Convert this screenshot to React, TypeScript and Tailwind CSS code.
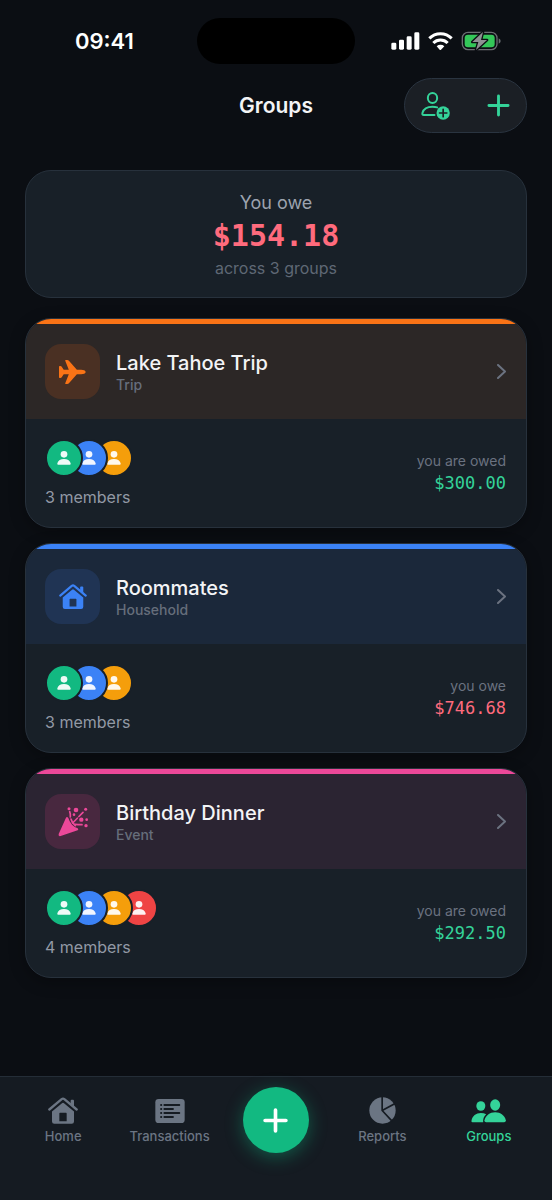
import React from "react";

type Group = {
  name: string;
  kind: string;
  members: number;
  label: string;
  amount: string;
  amountColor: string;
  bar: string;
  head: string;
  tile: string;
  icon: React.ReactNode;
};

const PlaneIcon = () => (
  <svg width="27" height="24" viewBox="0 0 80 71" fill="currentColor" aria-hidden="true">
    <path d="M79 35.5C79 40 72 42 66 42H53L30 68Q28 71 24 71H20Q17 71 19 67L29 42H14L8 51Q7 53 4 53H2Q0 53 0 51V20Q0 18 2 18H4Q7 18 8 20L14 29H29L19 4Q17 0 20 0H24Q28 0 30 3L53 29H66C72 29 79 31 79 35.5Z" />
  </svg>
);

const HomeIcon = ({ className }: { className: string }) => (
  <svg className={className} viewBox="0 0 90 80" fill="currentColor" aria-hidden="true">
    <path
      d="M4 37L41 6Q45 3 49 6L86 37"
      fill="none"
      stroke="currentColor"
      strokeWidth="7"
      strokeLinecap="round"
      strokeLinejoin="round"
    />
    <path d="M68 11Q68 8 71 8H75Q78 8 78 11V30L68 21Z" />
    <path
      fillRule="evenodd"
      d="M12 43L42 18Q45 16 48 18L78 43V73Q78 80 71 80H19Q12 80 12 73ZM36 47Q34 47 34 49V72H56V49Q56 47 54 47Z"
    />
  </svg>
);

const PartyIcon = () => (
  <svg width="30" height="30" viewBox="0 0 90 90" fill="currentColor" aria-hidden="true">
    <path d="M24 32Q27 27 31 33Q34 44 42 53Q50 61 59 64Q63 67 59 70L8 87Q0 89 2 81Z" />
    <g fill="none" stroke="currentColor" strokeWidth="5" strokeLinecap="round">
      <path d="M35 14Q38 21 37 30" />
      <path d="M44 48L75 16" strokeDasharray="20 7" />
      <path d="M51 52Q59 53 72 53" />
      <path d="M39 36Q41 46 52 56" />
    </g>
    <circle cx="33" cy="5" r="4.5" />
    <circle cx="54" cy="9" r="7" />
    <circle cx="83" cy="7" r="4.5" />
    <circle cx="48" cy="23" r="4" />
    <circle cx="70" cy="38" r="6.5" />
    <circle cx="86" cy="38" r="4" />
    <circle cx="84" cy="56" r="5" />
  </svg>
);

const TransactionsIcon = () => (
  <svg width="30" height="24" viewBox="0 0 90 72" aria-hidden="true">
    <rect x="1" width="88" height="72" rx="10" fill="currentColor" />
    <g stroke="#151b22" strokeWidth="5.5" strokeLinecap="round">
      <path d="M18 18h1M28 18h45M18 30h1M28 30h26M18 42h1M28 42h45M18 54h1M28 54h26" />
    </g>
  </svg>
);

const ReportsIcon = () => (
  <svg width="27" height="27" viewBox="0 0 80 80" aria-hidden="true">
    <circle cx="40" cy="40" r="39" fill="currentColor" />
    <path d="M39 -2V40L69 72M39 40L80 18" fill="none" stroke="#151b22" strokeWidth="5" />
  </svg>
);

const GroupsIcon = () => (
  <svg width="35" height="24" viewBox="0 0 104 72" fill="currentColor" aria-hidden="true">
    <ellipse cx="29" cy="21" rx="13.5" ry="14.5" />
    <ellipse cx="72" cy="18" rx="15" ry="17" />
    <path d="M4 70Q0 70 1 65C3 51 15 42 29 42Q38 42 45 46C38 52 35 60 36 70Z" />
    <path d="M45 70Q39 70 40 64C43 50 56 40 72 40C88 40 101 50 104 64Q104 70 99 70Z" />
  </svg>
);

const AddPersonIcon = () => (
  <svg width="29" height="28" viewBox="0 0 86 84" fill="none" aria-hidden="true">
    <g stroke="currentColor" strokeWidth="6" strokeLinecap="round">
      <ellipse cx="34" cy="18" rx="14" ry="15" />
      <path d="M40 69H8Q2 69 4 62C8 49 20 44 34 44Q42 44 48 46" />
    </g>
    <circle cx="66" cy="63" r="20" fill="currentColor" />
    <path d="M66 52V74M55 63H77" stroke="#1b1f25" strokeWidth="5" strokeLinecap="round" />
  </svg>
);

const PlusIcon = ({ className }: { className: string }) => (
  <svg className={className} viewBox="0 0 24 24" fill="none" stroke="currentColor" strokeLinecap="round" aria-hidden="true">
    <path d="M12 2V22M2 12H22" />
  </svg>
);

const StatusIcons = () => (
  <div className="flex items-center gap-2 text-white">
    <svg width="29" height="18" viewBox="0 0 87 54" fill="currentColor" aria-hidden="true">
      <rect x="1" y="32" width="15" height="21" rx="4" />
      <rect x="24" y="23" width="15" height="30" rx="4" />
      <rect x="47" y="13" width="15" height="40" rx="4" />
      <rect x="70" y="1" width="15" height="52" rx="4" />
    </svg>
    <svg width="25" height="18" viewBox="0 0 75 54" fill="none" stroke="currentColor" strokeWidth="9" aria-hidden="true">
      <path d="M4 19A47 47 0 0 1 71 19" />
      <path d="M16 33A30 30 0 0 1 59 33" />
      <path d="M26 43A17 17 0 0 1 49 43L39 53Q37 55 35 53Z" fill="currentColor" stroke="none" />
    </svg>
    <svg width="40" height="20" viewBox="0 0 120 60" aria-hidden="true">
      <rect x="4" y="4" width="104" height="52" rx="17" fill="none" stroke="#6b6e72" strokeWidth="4" />
      <rect x="11" y="11" width="90" height="38" rx="10" fill="#34c759" />
      <path d="M113 22Q119 25 119 30T113 38Z" fill="#6b6e72" />
      <path
        d="M66 3L34 33H52L45 57L78 27H60Z"
        fill="#8e9093"
        stroke="#0b0e13"
        strokeWidth="8"
        strokeLinejoin="round"
        paintOrder="stroke"
      />
    </svg>
  </div>
);

const avatars = [
  "z-40 bg-[#12b981]",
  "z-30 bg-[#3b82f6]",
  "z-20 bg-[#f59e0b]",
  "z-10 bg-[#ef4444]",
];

const groups: Group[] = [
  {
    name: "Lake Tahoe Trip",
    kind: "Trip",
    members: 3,
    label: "you are owed",
    amount: "$300.00",
    amountColor: "text-[#34d399]",
    bar: "bg-[#f97316]",
    head: "bg-[#2c2726]",
    tile: "bg-[#4a3023] text-[#f97316]",
    icon: <PlaneIcon />,
  },
  {
    name: "Roommates",
    kind: "Household",
    members: 3,
    label: "you owe",
    amount: "$746.68",
    amountColor: "text-[#ff6b7d]",
    bar: "bg-[#3b82f6]",
    head: "bg-[#1b283a]",
    tile: "bg-[#203454] text-[#3b82f6]",
    icon: <HomeIcon className="h-[25px] w-7" />,
  },
  {
    name: "Birthday Dinner",
    kind: "Event",
    members: 4,
    label: "you are owed",
    amount: "$292.50",
    amountColor: "text-[#34d399]",
    bar: "bg-[#ec4899]",
    head: "bg-[#2b2432]",
    tile: "bg-[#48283f] text-[#ec4899]",
    icon: <PartyIcon />,
  },
];

const Members = ({ count }: { count: number }) => (
  <div>
    <div className="flex -space-x-[13px]">
      {avatars.slice(0, count).map((color) => (
        <span
          key={color}
          className={`relative flex size-[38px] items-center justify-center rounded-full border-2 border-[#182028] ${color}`}
        >
          <svg width="14" height="14" viewBox="0 0 42 42" fill="#ffffff" fillOpacity="0.93" aria-hidden="true">
            <circle cx="21" cy="10" r="10" />
            <path d="M3 41Q0 41 1 37C3 28 11 24 21 24S39 28 41 37Q42 41 39 41Z" />
          </svg>
        </span>
      ))}
    </div>
    <p className="mt-2 text-base leading-6 text-[#9299a5]">{count} members</p>
  </div>
);

const GroupCard = ({ group }: { group: Group }) => (
  <a
    href="#"
    className="block overflow-hidden rounded-[26px] border border-[#27313c] bg-[#182028] shadow-[0_4px_16px_rgba(0,0,0,0.3)]"
  >
    <div className={`h-[5px] ${group.bar}`} />
    <div className={`flex items-center gap-4 py-5 pr-5 pl-[19px] ${group.head}`}>
      <div className={`flex size-[55px] items-center justify-center rounded-2xl ${group.tile}`}>
        {group.icon}
      </div>
      <div className="flex-1 pt-[3px]">
        <h2 className="text-xl leading-6 font-medium text-[#f3f4f6]">{group.name}</h2>
        <p className="text-sm leading-5 font-medium text-[#666e7b]">{group.kind}</p>
      </div>
      <svg width="9" height="15" viewBox="0 0 9 15" fill="none" stroke="#6b7280" strokeWidth="2" strokeLinecap="round" strokeLinejoin="round" aria-hidden="true">
        <path d="M1 1L8 7.500L1 14" />
      </svg>
    </div>
    <div className="flex items-center justify-between pt-5 pr-5 pb-[18px] pl-[19px]">
      <Members count={group.members} />
      <div className="pb-[3px] text-right">
        <p className="text-sm leading-5 text-[#6b7280]">{group.label}</p>
        <p className={`font-['DejaVu_Sans_Mono',monospace] text-[17px] leading-6 ${group.amountColor}`}>
          {group.amount}
        </p>
      </div>
    </div>
  </a>
);

const NavItem = ({
  label,
  icon,
  active = false,
}: {
  label: string;
  icon: React.ReactNode;
  active?: boolean;
}) => (
  <a
    href="#"
    aria-current={active ? "page" : undefined}
    className={`flex flex-col items-center gap-1 pt-5 ${active ? "text-[#34d399]" : "text-[#6b7583]"}`}
  >
    <span className="flex h-[27px] items-center">{icon}</span>
    <span className="text-[13px] leading-4 font-medium">{label}</span>
  </a>
);

const App = () => {
  return (
    <div className="flex min-h-screen flex-col bg-[#0b0e13] font-['Inter',sans-serif]">
      <div className="grid grid-cols-[1fr_158px_1fr] items-center px-[51px] pt-[18px]">
        <span className="pl-6 text-[22px] leading-7 font-semibold text-white">09:41</span>
        <div className="h-[46px] rounded-full bg-black" />
        <div className="flex justify-end">
          <StatusIcons />
        </div>
      </div>

      <header className="grid grid-cols-[1fr_auto_1fr] items-center px-[25px] pt-[14px]">
        <h1 className="col-start-2 text-[21px] leading-7 font-semibold text-[#f3f4f6]">Groups</h1>
        <div className="flex h-[55px] w-[123px] items-center justify-between justify-self-end rounded-full border border-[#2a3440] bg-[#1b1f25] px-4 text-[#34d399]">
          <button type="button" aria-label="Add person">
            <AddPersonIcon />
          </button>
          <button type="button" aria-label="New group">
            <PlusIcon className="size-[23px] stroke-3" />
          </button>
        </div>
      </header>

      <main className="flex flex-col px-[25px] pt-[37px] pb-8">
        <section className="mb-5 rounded-[26px] border border-[#27313c] bg-[#182028] pt-5 pb-[18px] text-center">
          <p className="text-lg leading-6 text-[#9ca3af]">You owe</p>
          <p className="font-['DejaVu_Sans_Mono',monospace] text-[30px] leading-[42px] font-bold text-[#ff6b7d]">
            $154.18
          </p>
          <p className="text-base leading-[22px] text-[#5f6875]">across 3 groups</p>
        </section>
        <div className="flex flex-col gap-[15px]">
          {groups.map((group) => (
            <GroupCard key={group.name} group={group} />
          ))}
        </div>
      </main>

      <nav className="mt-auto grid h-[124px] grid-cols-5 items-start border-t border-[#242d37] bg-[#151b22] px-[10px]">
        <NavItem label="Home" icon={<HomeIcon className="h-[27px] w-[30px]" />} />
        <NavItem label="Transactions" icon={<TransactionsIcon />} />
        <button
          type="button"
          aria-label="Add expense"
          className="mt-[10px] flex size-[66px] items-center justify-center justify-self-center rounded-full bg-[#12b981] text-white shadow-[0_4px_18px_rgba(16,185,129,0.4)]"
        >
          <PlusIcon className="size-[25px] stroke-[3.5]" />
        </button>
        <NavItem label="Reports" icon={<ReportsIcon />} />
        <NavItem label="Groups" icon={<GroupsIcon />} active />
      </nav>
    </div>
  );
};

export default App;
